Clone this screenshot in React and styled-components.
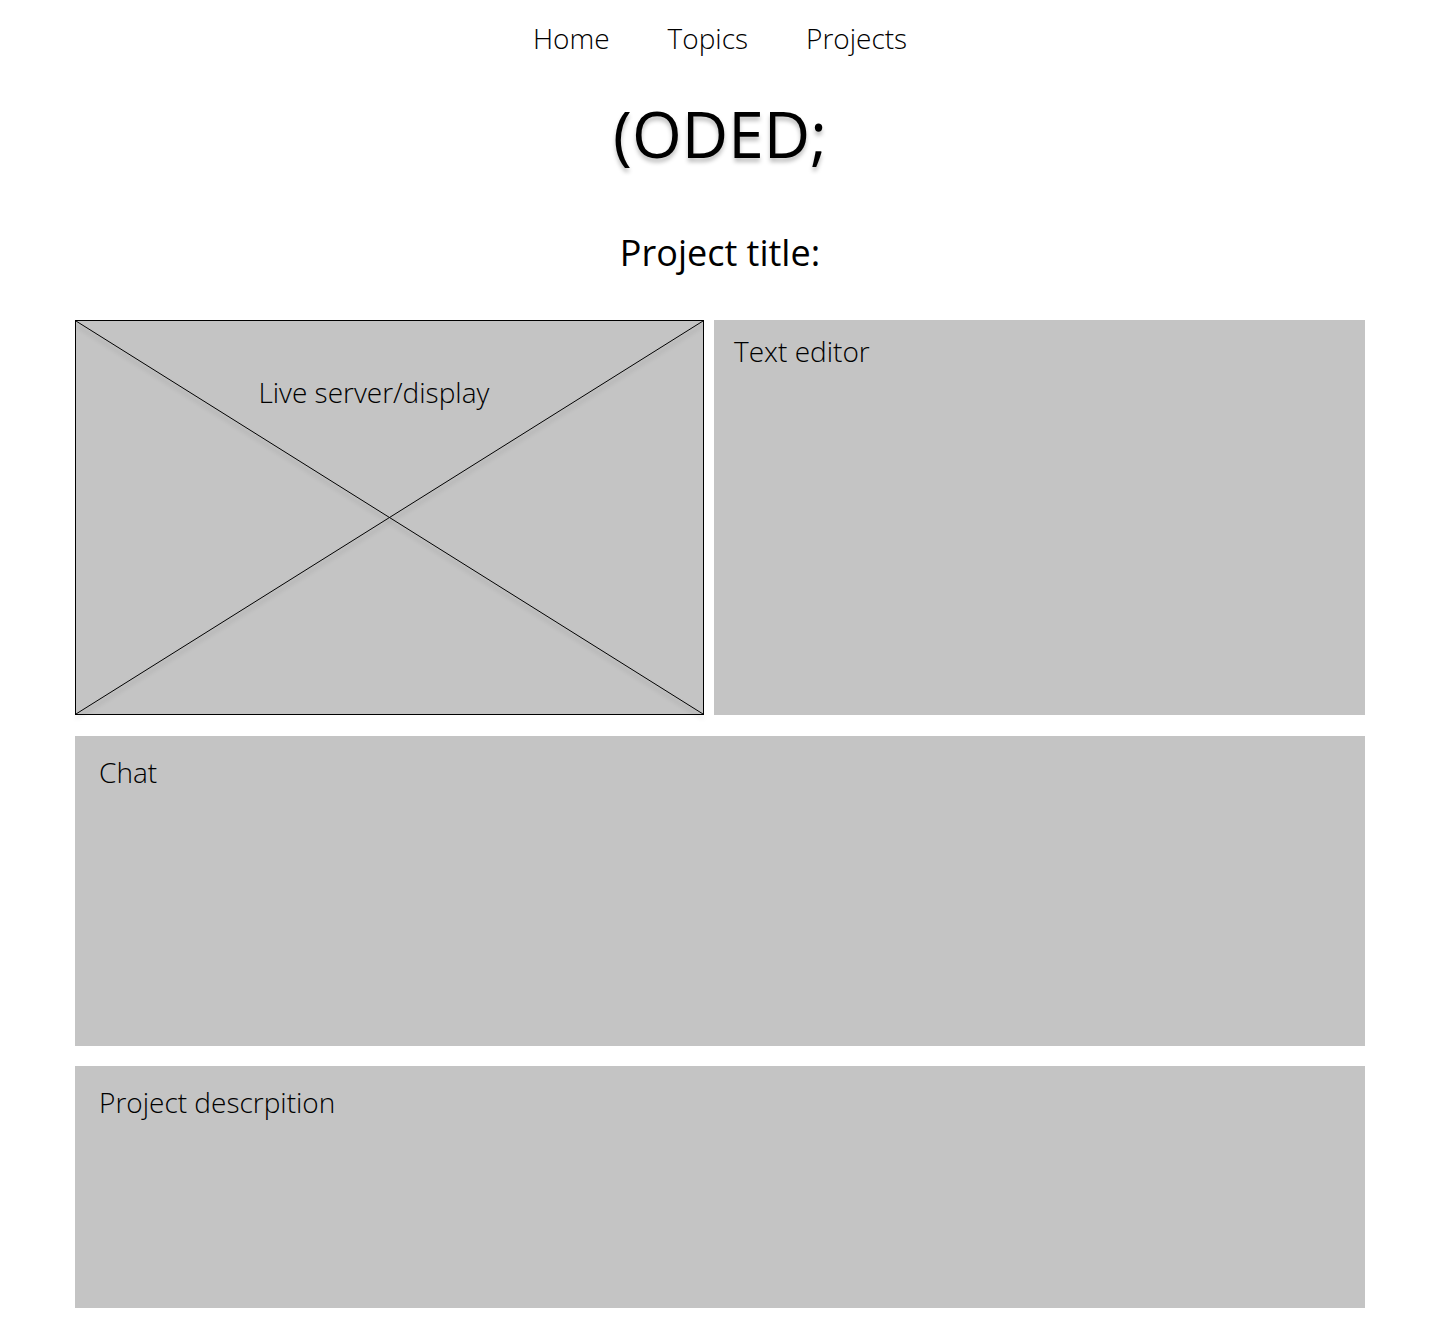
import React from "react";
import styled, { createGlobalStyle } from "styled-components";

const GlobalStyle = createGlobalStyle`
  *, *::before, *::after { box-sizing: border-box; }
  body {
    margin: 0;
    background: #fff;
    color: #000;
    font-family: "Open Sans", "Noto Sans", sans-serif;
  }
`;

const Page = styled.div`
  padding: 19px 75px 18px;
`;

const Nav = styled.nav`
  display: flex;
  justify-content: center;
  gap: 58px;
`;

const NavLink = styled.a`
  color: inherit;
  text-decoration: none;
  font-size: 28px;
  font-weight: 300;
  line-height: 38px;
`;

const Logo = styled.h1`
  margin: 33px 0 0;
  text-align: center;
  font-size: 64px;
  font-weight: 400;
  line-height: 88px;
  text-shadow: 0 4px 4px rgba(0, 0, 0, 0.25);
`;

const Title = styled.h2`
  margin: 51px 0 43px;
  text-align: center;
  font-size: 36px;
  font-weight: 400;
  line-height: 48px;
`;

const Workspace = styled.main`
  display: grid;
  grid-template-columns: 629fr 651fr;
  column-gap: 10px;
`;

const Panel = styled.section`
  grid-column: ${(p) => (p.$wide ? "1 / -1" : "auto")};
  min-height: ${(p) => p.$height}px;
  margin-top: ${(p) => p.$gap || 0}px;
  padding: ${(p) => (p.$wide ? "17px 24px" : "12px 20px")};
  background: #c4c4c4;
`;

const Display = styled.section`
  position: relative;
  min-height: 395px;
  padding: 52px 20px 20px 29%;
  border: 1px solid #000;
  background: #c4c4c4;
`;

const Cross = styled.svg`
  position: absolute;
  inset: 0;
  width: 100%;
  height: 100%;
  overflow: visible;
  filter: drop-shadow(0 4px 2px rgba(0, 0, 0, 0.25));
`;

const Label = styled.h3`
  margin: 0;
  font-size: 28px;
  font-weight: 300;
  line-height: 38px;
`;

export default function App() {
  return (
    <>
      <GlobalStyle />
      <Page>
        <Nav>
          <NavLink href="#home">Home</NavLink>
          <NavLink href="#topics">Topics</NavLink>
          <NavLink href="#projects">Projects</NavLink>
        </Nav>
        <Logo>(ODED;</Logo>
        <Title>Project title:</Title>
        <Workspace>
          <Display>
            <Cross aria-hidden="true" stroke="#000" strokeWidth="1">
              <line x1="0" y1="0" x2="100%" y2="100%" />
              <line x1="0" y1="100%" x2="100%" y2="0" />
            </Cross>
            <Label>Live server/display</Label>
          </Display>
          <Panel $height={395}>
            <Label>Text editor</Label>
          </Panel>
          <Panel $wide $height={310} $gap={21}>
            <Label>Chat</Label>
          </Panel>
          <Panel $wide $height={242} $gap={20}>
            <Label>Project descrpition</Label>
          </Panel>
        </Workspace>
      </Page>
    </>
  );
}
